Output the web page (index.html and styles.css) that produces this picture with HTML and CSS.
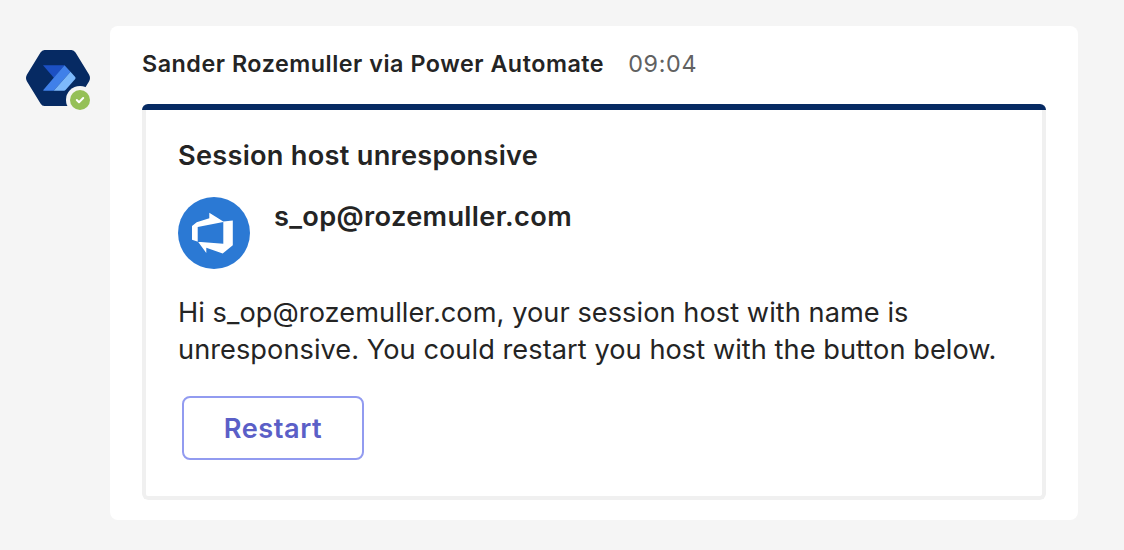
FILE: index.html
```html
<!DOCTYPE html>
<html lang="en">
<head>
<meta charset="utf-8">
<title>Session host unresponsive</title>
<link rel="stylesheet" href="styles.css">
</head>
<body>
<main class="message">
  <svg class="avatar" viewBox="0 0 66 62" aria-hidden="true">
    <path fill="#062a63" d="M18.500 0H45.500Q48 0 49.500 2.500L63 24.500Q65 28 63 31.500L49.500 53.500Q48 56 45.500 56H18.500Q16 56 14.500 53.500L1 31.500Q-1 28 1 24.500L14.500 2.500Q16 0 18.500 0Z"/>
    <path fill="#1c50c4" d="M17 15.300H38.500L28 28Z"/>
    <path fill="#4080e9" d="M38.500 15.300L44.500 21.700L27.700 40.700H18Q16.500 40.700 17.500 39.700Z"/>
    <path fill="#7db9fb" d="M44.500 21.700L49.200 27Q50 28 49.200 29L39.500 40.100Q39 40.700 38 40.700H27.700Z"/>
    <circle cx="54" cy="50" r="14" fill="#f5f5f5"/>
    <circle cx="54" cy="50" r="10" fill="#95c057"/>
    <path fill="none" stroke="#fff" stroke-width="2" stroke-linecap="round" stroke-linejoin="round" d="M50.800 50L53 52.300L57.200 48"/>
  </svg>
  <section class="bubble">
    <header class="meta">
      <span class="author">Sander Rozemuller via Power Automate</span>
      <time class="time">09:04</time>
    </header>
    <article class="card">
      <div class="accent"></div>
      <div class="content">
        <h1 class="title">Session host unresponsive</h1>
        <div class="user">
          <svg class="logo" viewBox="0 0 72 72" aria-hidden="true">
            <circle cx="36" cy="36" r="36" fill="#2b79d4"/>
            <path fill="#fff" fill-rule="evenodd" d="M14 29L18.700 25.300L31.300 21.300V15.700L45.300 24.500L54.800 23.500V48.300L44.700 56.500L28.300 50.700V56L20 44.700L14 42.700ZM19.700 30V44.700L45.300 46.700V25Z"/>
          </svg>
          <span class="email">s_op@rozemuller.com</span>
        </div>
        <p class="text"><span class="line">Hi s_op@rozemuller.com, your session host with name is</span> <span class="line">unresponsive. You could restart you host with the button below.</span></p>
        <button class="restart" type="button">Restart</button>
      </div>
    </article>
  </section>
</main>
</body>
</html>
```

FILE: styles.css
```css
* { box-sizing: border-box; }
body {
  margin: 0;
  min-height: 550px;
  background: #f5f5f5;
  color: #242424;
  font-family: Inter, "Liberation Sans", sans-serif;
}
.message {
  display: flex;
  align-items: flex-start;
  gap: 18px;
  padding: 26px 46px 30px 26px;
}
.avatar { width: 66px; height: 62px; margin-top: 24px; flex: none; overflow: visible; }
.bubble {
  width: 968px;
  height: 494px;
  padding: 20px 32px;
  background: #fff;
  border-radius: 8px;
}
.meta {
  display: flex;
  align-items: center;
  gap: 24px;
  height: 36px;
  margin-bottom: 22px;
  font-size: 23.3px;
  line-height: 36px;
  letter-spacing: 0.53px;
  white-space: nowrap;
}
.author { font-weight: 600; }
.time { color: #616161; letter-spacing: 0.7px; }
.card {
  height: 396px;
  border-radius: 6px;
  overflow: hidden;
}
.accent { height: 6px; background: #062a63; }
.content {
  height: 390px;
  padding: 27px 32px;
  border: solid #f0f0f0;
  border-width: 0 4px 4px;
  border-radius: 0 0 6px 6px;
}
.title {
  margin: 0 0 23px;
  font-size: 27.2px;
  font-weight: 600;
  line-height: 37px;
  letter-spacing: 0.26px;
}
.user { display: flex; gap: 24px; }
.logo { width: 72px; height: 72px; }
.email { font-size: 27.2px; font-weight: 600; line-height: 39px; letter-spacing: 0.33px; }
.text {
  margin: 25px 0 28px;
  font-size: 27.2px;
  line-height: 37px;
  letter-spacing: 0.05px;
  white-space: nowrap;
}
.line { display: block; }
.restart {
  display: block;
  width: 182px;
  height: 64px;
  margin-left: 4px;
  padding: 2px 0 0;
  background: #fff;
  border: 2px solid #929bf0;
  border-radius: 8px;
  color: #5b5fc7;
  font: 600 27.2px/58px Inter, "Liberation Sans", sans-serif;
  letter-spacing: 0.55px;
}
```
